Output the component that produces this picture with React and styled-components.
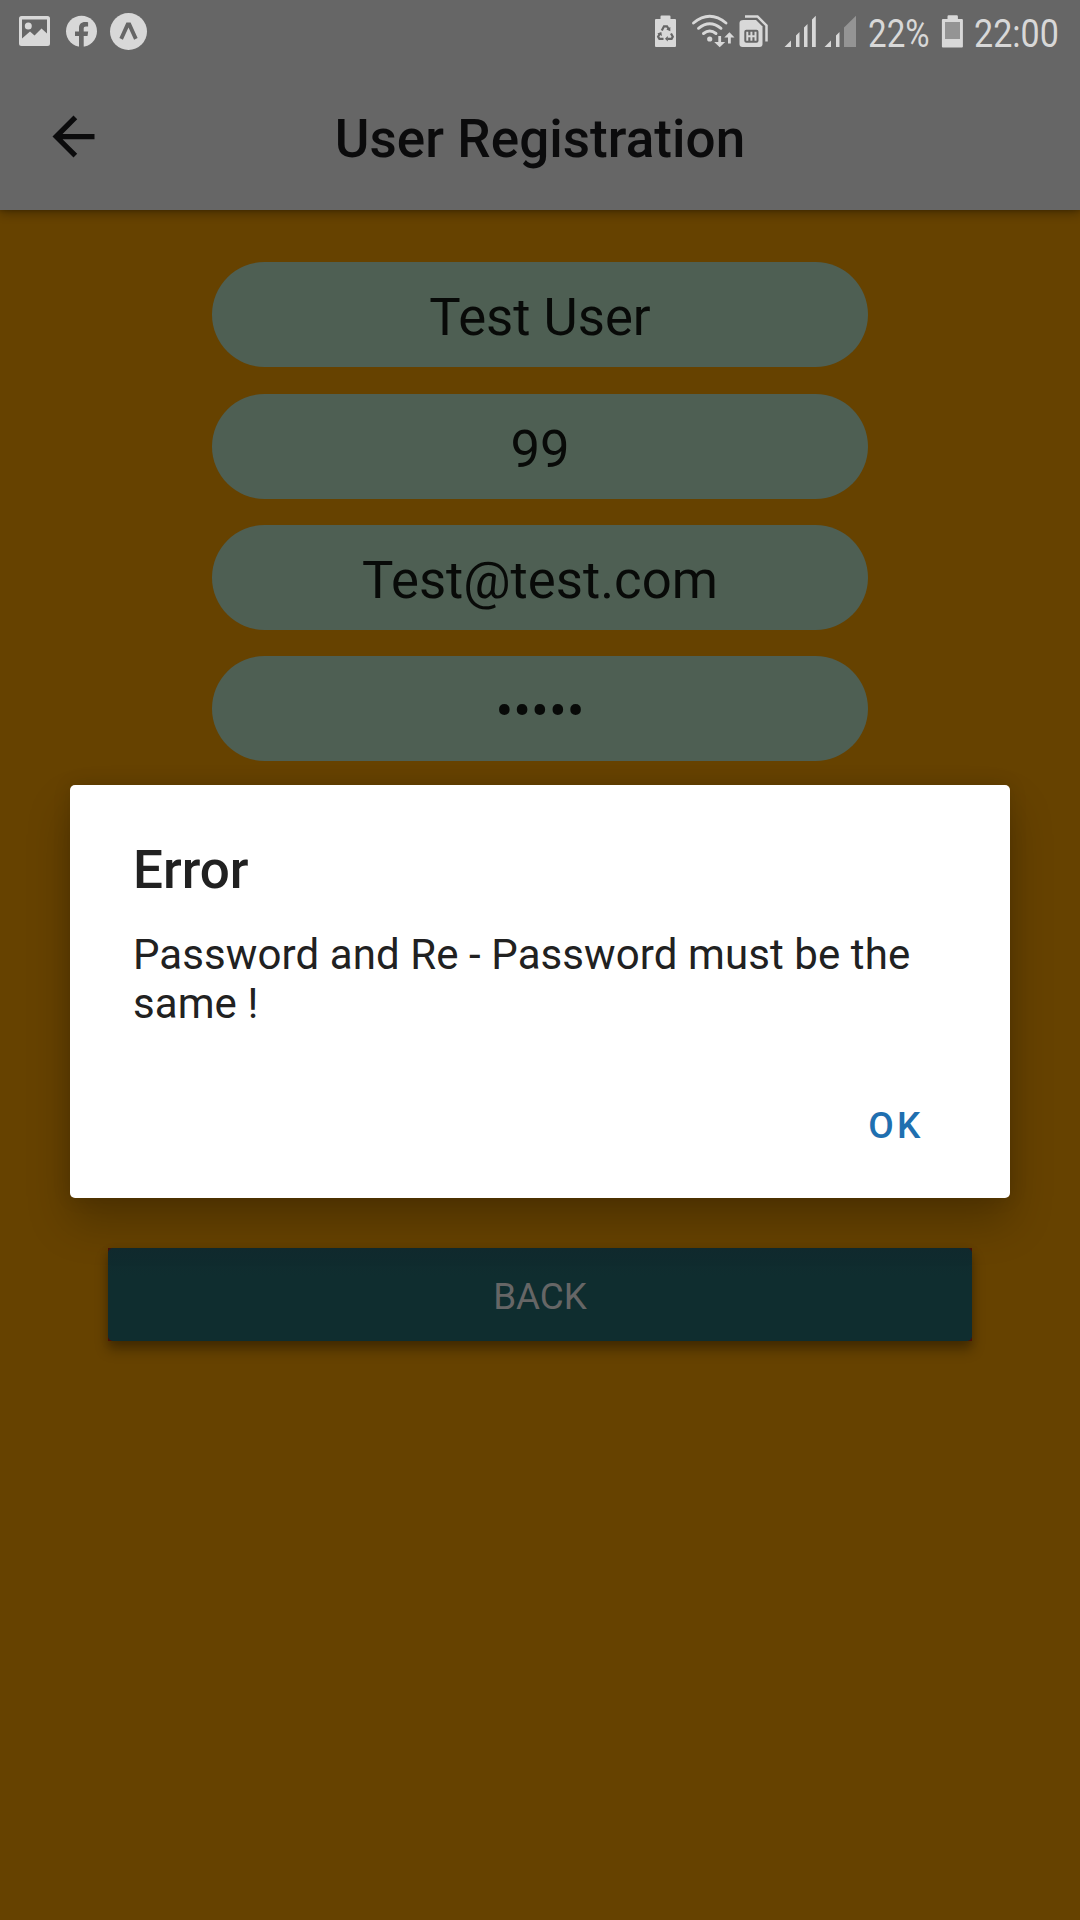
import React from "react";
import styled, { createGlobalStyle } from "styled-components";

const GlobalStyle = createGlobalStyle`
  * { box-sizing: border-box; }
  html, body { margin: 0; padding: 0; background: #664200; }
  button, input { font-family: inherit; border: 0; outline: 0; }
`;

const Screen = styled.div`
  width: 1080px;
  height: 1920px;
  display: flex;
  flex-direction: column;
  overflow: hidden;
  position: relative;
  background: #664200;
  font-family: Roboto, "Liberation Sans", sans-serif;
`;

const Top = styled.div`
  height: 210px;
  flex: none;
  background: #666666;
  box-shadow: 0 3px 10px rgba(0, 0, 0, 0.32), 0 1px 3px rgba(0, 0, 0, 0.15);
`;

const StatusBar = styled.div`
  height: 63px;
  display: flex;
  justify-content: space-between;
`;

const StatusGroup = styled.div`
  display: flex;
  align-items: flex-start;
`;

const Icon = styled.svg`
  display: block;
  flex: none;
  width: ${(p) => p.$w}px;
  height: 63px;
  fill: #d8d8d8;
`;

const StatusText = styled.span`
  display: block;
  width: ${(p) => p.$w}px;
  padding-top: 10px;
  font-size: 39.4px;
  line-height: 47px;
  color: #d8d8d8;
  white-space: nowrap;
  transform: scaleX(${(p) => p.$scale});
  transform-origin: 0 0;
`;

const Header = styled.header`
  height: 147px;
  display: grid;
  grid-template-columns: 147px 1fr 147px;
  align-items: center;
`;

const BackArrow = styled.svg`
  width: 63px;
  height: 63px;
  margin-left: 42px;
  fill: #0b0b0c;
`;

const Title = styled.h1`
  margin: 0;
  padding-top: 5px;
  text-align: center;
  font-size: 53px;
  line-height: 62px;
  font-weight: 500;
  letter-spacing: 0.05px;
  color: #0b0b0c;
`;

const Form = styled.main`
  padding-top: 52.25px;
  display: flex;
  flex-direction: column;
  align-items: center;
  gap: 26.25px;
`;

const Field = styled.div`
  width: 656px;
  height: 105px;
  padding-top: 5px;
  border-radius: 52.5px;
  background: #4e5f53;
  color: #080a08;
  font-size: 52.7px;
  line-height: 100px;
  text-align: center;
`;

const ButtonFrame = styled.div`
  width: 864px;
  height: 93px;
  margin-top: 460.75px;
  background: #4a0e0a;
  box-shadow: 0 9px 12px rgba(0, 0, 0, 0.3), 0 2px 8px rgba(0, 0, 0, 0.14);
`;

const BackButton = styled.button`
  display: block;
  width: 100%;
  height: 93px;
  padding: 4px 0 0;
  border-radius: 5px;
  background: linear-gradient(#112a2e, #0f2d2f 30%);
  color: #666666;
  font-size: 36.75px;
  line-height: 89px;
  font-weight: 400;
`;

const Overlay = styled.div`
  position: absolute;
  inset: 0;
  padding: 785px 70px 0;
`;

const Dialog = styled.section`
  height: 412.5px;
  padding: 54px 63px 0;
  display: flex;
  flex-direction: column;
  border-radius: 5px;
  background: #ffffff;
  box-shadow: 0 24px 44px rgba(0, 0, 0, 0.23), 0 0 18px rgba(0, 0, 0, 0.12);
  color: #212121;
`;

const DialogTitle = styled.h2`
  margin: 0;
  font-size: 53px;
  line-height: 62px;
  font-weight: 500;
`;

const Message = styled.p`
  margin: 29px 0 0;
  font-size: 42px;
  line-height: 49px;
  letter-spacing: 0.09px;
`;

const OkButton = styled.button`
  align-self: flex-end;
  margin: 76px 23px 0 0;
  padding: 0;
  background: none;
  color: #1f6fb0;
  font-size: 37px;
  line-height: 43px;
  font-weight: 500;
  letter-spacing: 3.5px;
`;

const VALUES = ["Test User", "99", "Test@test.com", "•••••"];

function Notifications() {
  return (
    <StatusGroup>
      <Icon $w={60} viewBox="0 0 60 63">
        <path
          fillRule="evenodd"
          d="M21.5 16h26a2.5 2.5 0 0 1 2.5 2.5v25a2.5 2.5 0 0 1-2.5 2.5h-26a2.5 2.5 0 0 1-2.5-2.5v-25a2.5 2.5 0 0 1 2.5-2.5zM22 19.5V38.5L30 31.5 34.5 35.5 41.5 28.5 47 33.5V19.5z"
        />
        <circle cx="28.3" cy="26" r="3.5" />
      </Icon>
      <Icon $w={42} viewBox="60 0 42 63">
        <circle cx="81.5" cy="31.3" r="15.5" />
        <path
          fill="#666666"
          d="M79 47V36h-4v-4.5h4v-3.2c0-4.2 2.3-6.3 6-6.3 1.2 0 2.3.1 3.1.2v4.2h-2.1c-1.7 0-2.3.9-2.3 2.2v2.900h4.500l-.7 4.500h-3.800v11z"
        />
      </Icon>
      <Icon $w={50} viewBox="102 0 50 63">
        <circle cx="128.5" cy="31.5" r="18.5" />
        <path
          fill="#666666"
          d="M126.4 22.5h4.2l7 15.5-3.500 1.700-5.600-12.200-5.600 12.200-3.500-1.700z"
        />
      </Icon>
    </StatusGroup>
  );
}

function SystemStatus() {
  return (
    <StatusGroup>
      <Icon $w={36} viewBox="648 0 36 63">
        <path d="M660.5 19v-2.500q0-1 1-1h8q1 0 1 1V19h4.500q1 0 1 1v26q0 1-1 1h-19q-1 0-1-1V20q0-1 1-1z" />
        <g fill="none" stroke="#666666" strokeWidth="2.2">
          <path d="M661.8 30.500 664 26.300h3l1.800 3" />
          <path d="M671 33.500l1.800 3.200-1.200 2.200h-4.100" />
          <path d="M663.500 38.900h-4.100l-1.300-2.200 1.800-3.200" />
        </g>
        <g fill="#666666">
          <path d="M670.300 27v4.200l-4-1.600z" />
          <path d="M667.800 36v5.600l-2.800-2.800z" />
          <path d="M657.300 33.500l4-1.500.7 4z" />
        </g>
      </Icon>
      <Icon $w={52} viewBox="684 0 52 63">
        <g fill="none" stroke="#d8d8d8" strokeWidth="2.9" strokeLinecap="round">
          <path d="M693.5 23Q709.700 9.500 726 23" />
          <path d="M698.5 28.300Q709.700 19 721 28.300" />
          <path d="M703.5 33.500Q709.700 28.500 716 33.500" />
        </g>
        <circle cx="709.7" cy="39" r="2.6" />
        <path d="M718.3 36h2.8v6h4.100l-5.500 5.200-5.500-5.200h4.100zM728 43.500h2.800v-6h3.700l-5.100-5.200-5.100 5.200h3.700z" />
      </Icon>
      <Icon $w={40} viewBox="736 0 40 63">
        <path d="M743.5 20h12.500l6.500 6.500V44q0 3-3 3h-17q-3 0-3-3V23q0-3 4-3z" />
        <path
          fill="none"
          stroke="#d8d8d8"
          strokeWidth="2.5"
          d="M745 16.400h12.500l9 9V41.500"
        />
        <rect x="744.3" y="29.8" width="14.2" height="13" rx="2" fill="#666666" />
        <path
          fill="none"
          stroke="#d8d8d8"
          strokeWidth="2"
          d="M747.3 31.800v9M751.4 31.800v9M755.5 31.800v9M747.3 36.300h8.200"
        />
      </Icon>
      <Icon $w={44} viewBox="776 0 44 63">
        <path d="M784.5 47 791 40.500V47zM796 47V35.500l3.500-3.500v15zM804 47V27.500l3.500-3.500v23zM812 47V19.500l3.800-3.800V47z" />
      </Icon>
      <Icon $w={48} viewBox="820 0 48 63">
        <path d="M824.5 47 831 40.500V47zM836 47V35.500l3.500-3.500v15z" />
        <path fill="#949494" d="M844 47V27.500L856 15.700V47z" />
      </Icon>
      <StatusText $w={68} $scale={0.842}>22%</StatusText>
      <Icon $w={38} viewBox="936 0 38 63">
        <path d="M947.5 19v-2.500q0-1.200 1.200-1.200h8q1.200 0 1.200 1.200V19h4q1 0 1 1v26.500q0 1-1 1h-19q-1 0-1-1V20q0-1 1-1z" />
        <path fill="#949494" d="M945 22h15v17h-15z" />
      </Icon>
      <StatusText $w={106} $scale={0.865}>22:00</StatusText>
    </StatusGroup>
  );
}

export default function App() {
  return (
    <Screen>
      <GlobalStyle />
      <Top>
        <StatusBar>
          <Notifications />
          <SystemStatus />
        </StatusBar>
        <Header>
          <BackArrow viewBox="0 0 24 24">
            <path d="M20 11H7.830l5.590-5.590L12 4l-8 8 8 8 1.410-1.410L7.830 13H20v-2z" />
          </BackArrow>
          <Title>User Registration</Title>
        </Header>
      </Top>
      <Form>
        {VALUES.map((value) => (
          <Field key={value}>{value}</Field>
        ))}
        <ButtonFrame>
          <BackButton>BACK</BackButton>
        </ButtonFrame>
      </Form>
      <Overlay>
        <Dialog>
          <DialogTitle>Error</DialogTitle>
          <Message>Password and Re - Password must be the same !</Message>
          <OkButton>OK</OkButton>
        </Dialog>
      </Overlay>
    </Screen>
  );
}
